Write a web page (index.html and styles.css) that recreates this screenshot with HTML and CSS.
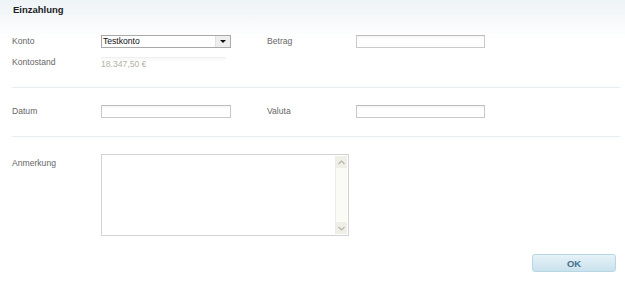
FILE: index.html
```html
<!DOCTYPE html>
<html lang="de">
<head>
    <meta charset="UTF-8">
    <meta name="viewport" content="width=device-width, initial-scale=1.0">
    <title>Einzahlung</title>
    <link rel="stylesheet" href="styles.css">
</head>
<body>
    <div class="dialog">
        <h1 class="title">Einzahlung</h1>

        <!-- Konto / Betrag -->
        <div class="section first">
            <div class="grid">
                <label class="label">Konto</label>
                <div class="select">
                    <span class="select-text">Testkonto</span>
                    <span class="select-btn"><i class="arrow"></i></span>
                </div>
                <span></span>
                <label class="label">Betrag</label>
                <input class="input" type="text">

                <label class="label">Kontostand</label>
                <div class="readonly">18.347,50 €</div>
            </div>
        </div>

        <!-- Datum / Valuta -->
        <div class="section">
            <div class="grid">
                <label class="label">Datum</label>
                <input class="input" type="text">
                <span></span>
                <label class="label">Valuta</label>
                <input class="input" type="text">
            </div>
        </div>

        <!-- Anmerkung -->
        <div class="section last">
            <div class="note-row">
                <label class="label note-label">Anmerkung</label>
                <div class="textarea">
                    <textarea class="textarea-field"></textarea>
                    <div class="scrollbar">
                        <span class="scroll-btn">
                            <svg width="7" height="5" viewBox="0 0 7 5"><polyline points="0.5,4 3.5,1 6.5,4" fill="none" stroke="#b5b5a8" stroke-width="1.2"/></svg>
                        </span>
                        <span class="scroll-track"></span>
                        <span class="scroll-btn">
                            <svg width="7" height="5" viewBox="0 0 7 5"><polyline points="0.5,1 3.5,4 6.5,1" fill="none" stroke="#b5b5a8" stroke-width="1.2"/></svg>
                        </span>
                    </div>
                </div>
            </div>
        </div>

        <div class="actions">
            <button class="btn" type="button">OK</button>
        </div>
    </div>
</body>
</html>
```

FILE: styles.css
```css
*{
    padding: 0;
    margin: 0;
    box-sizing: border-box;
}
body{
    font-family: "Liberation Sans", Arial, sans-serif;
    font-size: 8.6px;
    color: #666;
    background: #fff;
}
.dialog{
    width: 625px;
    height: 281px;
    background: linear-gradient(#eef3f6 0, #fbfcfd 30px, #fff 40px);
    overflow: hidden;
}
.title{
    padding: 3px 13px 0;
    font-size: 9.5px;
    line-height: 14px;
    font-weight: bold;
    color: #222;
}
.section{
    margin: 0 5px 0 12px;
    padding: 17px 0 18px;
    border-bottom: 1px solid #e6eef2;
}
.section.first{
    padding-top: 18px;
}
.section.last{
    border-bottom: none;
    padding-bottom: 0;
}
.grid{
    display: grid;
    grid-template-columns: 89px 130px 36px 89px 129px;
    grid-auto-rows: 13px;
    row-gap: 8px;
    align-items: center;
}
.label{
    line-height: 13px;
    color: #666;
}
.input{
    display: block;
    height: 13px;
    width: 100%;
    border: 1px solid #c9c9c9;
    border-top-color: #bdbdbd;
    background: linear-gradient(#f4f4f4, #fff 3px);
    outline: none;
}
.select{
    display: flex;
    height: 13px;
    border: 1px solid #a9a9a9;
    background: #fff;
    color: #111;
}
.select-text{
    flex: 1;
    line-height: 11px;
    padding-left: 1px;
    font-size: 8.6px;
}
.select-btn{
    display: flex;
    align-items: center;
    justify-content: center;
    width: 15px;
    background: #eeeeee;
    border-left: 1px solid #e2e2e2;
}
.arrow{
    width: 0;
    height: 0;
    border-left: 3px solid transparent;
    border-right: 3px solid transparent;
    border-top: 3px solid #111;
}
.readonly{
    height: 13px;
    width: 125px;
    line-height: 13px;
    color: #b3b1a4;
    border-top: 1px solid #f0f0f0;
    background: linear-gradient(#f7f7f7, #fff 4px);
    margin-top: 1px;
}
.note-row{
    display: flex;
    align-items: flex-start;
}
.note-label{
    width: 89px;
    margin-top: 3px;
}
.textarea{
    display: flex;
    width: 248px;
    height: 82px;
    border: 1px solid #d2d2d2;
    background: #fff;
}
.textarea-field{
    flex: 1;
    border: none;
    resize: none;
    outline: none;
    background: transparent;
}
.scrollbar{
    display: flex;
    flex-direction: column;
    width: 12px;
    margin: 1px 1px 1px 0;
    background: #fbfbf5;
    border-left: 1px solid #eeeee8;
}
.scroll-btn{
    display: flex;
    align-items: center;
    justify-content: center;
    height: 12px;
    background: #efefe8;
}
.scroll-track{
    flex: 1;
}
.actions{
    display: flex;
    justify-content: flex-end;
    padding: 18px 9px 0 0;
}
.btn{
    width: 84px;
    height: 18px;
    border: 1px solid #b9d6e3;
    border-radius: 3px;
    background: linear-gradient(#e6f2f8, #c9e2ed);
    color: #46708c;
    font-family: "Liberation Sans", Arial, sans-serif;
    font-size: 9.5px;
    font-weight: bold;
    cursor: pointer;
}
```
